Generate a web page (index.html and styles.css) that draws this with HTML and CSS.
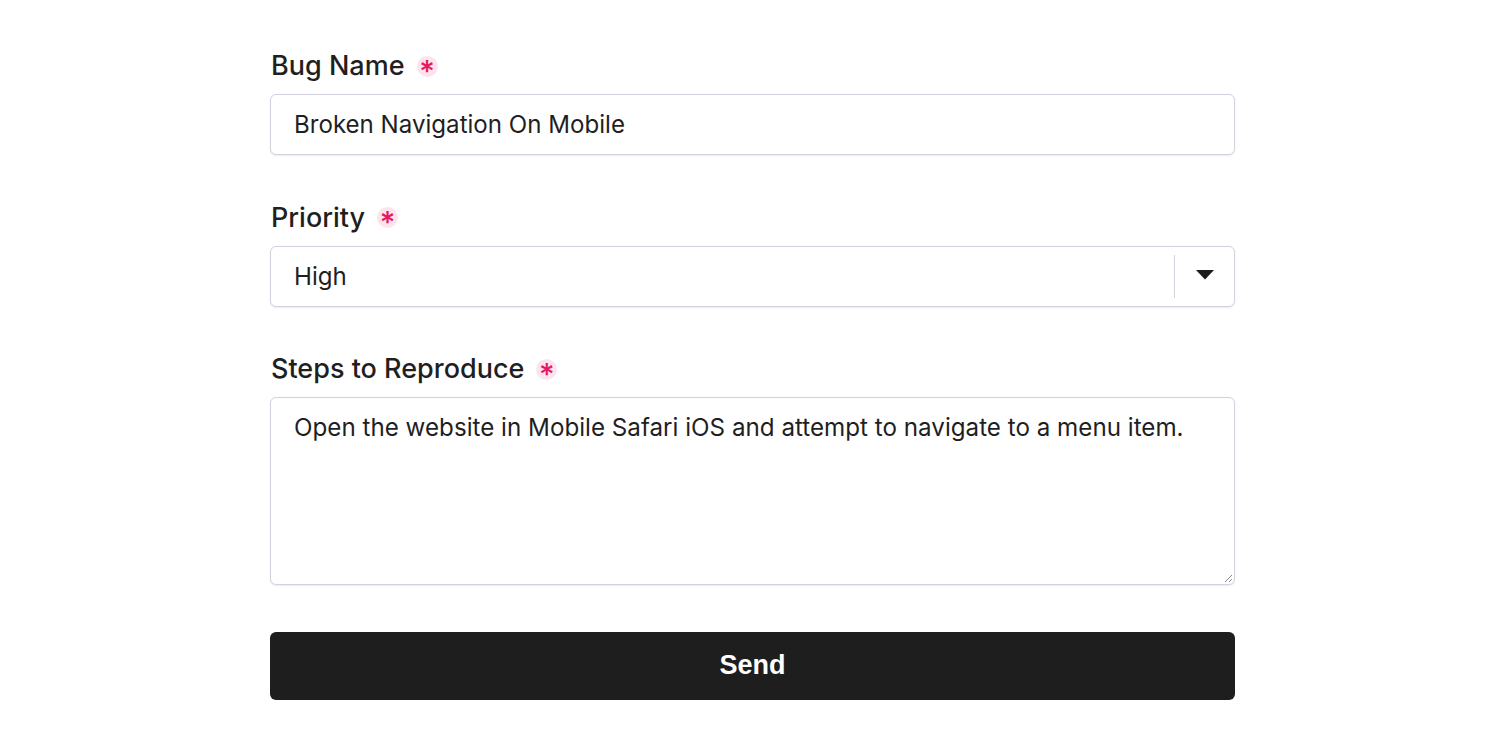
FILE: index.html
```html
<!DOCTYPE html>
<html>
<head>
<meta charset="utf-8">
<link rel="stylesheet" href="styles.css">
</head>
<body>
<form class="form">
  <div class="field">
    <label class="label">Bug Name <span class="req">*</span></label>
    <div class="input">Broken Navigation On Mobile</div>
  </div>
  <div class="field">
    <label class="label">Priority <span class="req">*</span></label>
    <div class="input select">
      <span class="select-value">High</span>
      <span class="select-sep"></span>
      <span class="select-arrow"><svg width="18" height="10" viewBox="0 0 18 10"><path d="M0 0 H18 L9 9.5 Z" fill="#1c1c1c"/></svg></span>
    </div>
  </div>
  <div class="field">
    <label class="label">Steps to Reproduce <span class="req">*</span></label>
    <div class="input textarea">Open the website in Mobile Safari iOS and attempt to navigate to a menu item.
      <svg class="grip" width="10" height="10" viewBox="0 0 10 10"><path d="M9 2 L2 9 M9 6 L6 9" stroke="#888" stroke-width="1"/></svg>
    </div>
  </div>
  <button type="button" class="send">Send</button>
</form>
</body>
</html>
```
FILE: styles.css
```css
html, body {
  margin: 0;
  padding: 0;
  background: #ffffff;
}
body {
  font-family: Inter, "Noto Sans", sans-serif;
  color: #1f1f1f;
}
.form {
  width: 965px;
  margin: 0 0 0 270px;
  padding-top: 50px;
  display: flex;
  flex-direction: column;
}
.field {
  display: flex;
  flex-direction: column;
  margin-bottom: 46.5px;
}
.label {
  display: flex;
  align-items: center;
  font-size: 27px;
  line-height: 32px;
  font-weight: 500;
  margin-bottom: 12px;
  margin-left: 1px;
}
.req {
  display: inline-flex;
  align-items: center;
  justify-content: center;
  width: 21px;
  height: 21px;
  border-radius: 50%;
  background: #fde3ec;
  color: #e5195f;
  font-size: 30px;
  font-weight: 500;
  line-height: 1;
  padding-top: 9px;
  box-sizing: border-box;
  margin-left: 12px;
}
.input {
  box-sizing: border-box;
  height: 61px;
  border: 1px solid #cfd3de;
  border-radius: 6px;
  box-shadow: 0 1px 2px rgba(0,0,0,0.08);
  padding: 0 23px;
  font-size: 24.1px;
  display: flex;
  align-items: center;
  background: #fff;
}
.select {
  padding-right: 0;
}
.select-value {
  flex: 1;
}
.select-sep {
  width: 1px;
  height: 43px;
  background: #cfd3de;
}
.select-arrow {
  width: 59px;
  display: flex;
  justify-content: center;
  align-items: center;
  padding-bottom: 2px;
}
.textarea {
  height: 188px;
  align-items: flex-start;
  padding-top: 15px;
  line-height: 30px;
  font-size: 24.2px;
  position: relative;
}
.grip {
  position: absolute;
  right: 1px;
  bottom: 1px;
}
.send {
  height: 68px;
  border: none;
  border-radius: 6px;
  background: #1e1e1e;
  color: #fff;
  font-family: "Liberation Sans", Arial, sans-serif;
  font-weight: 700;
  font-size: 27px;
  cursor: pointer;
  padding: 0;
}
```
